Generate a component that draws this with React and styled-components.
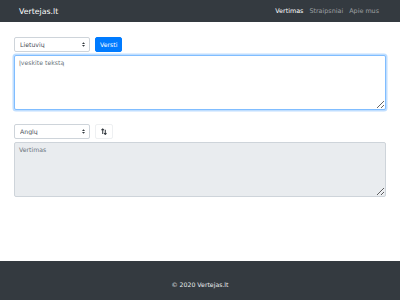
import React from 'react';
import styled, { createGlobalStyle } from 'styled-components';

const Global = createGlobalStyle`
	html, body {
		margin: 0;
		padding: 0;
		background: #fff;
		font-family: "DejaVu Sans", "Liberation Sans", sans-serif;
	}
	* { box-sizing: border-box; }
`;

const Page = styled.div`
	display: flex;
	flex-direction: column;
	min-height: 300px;
`;

const Navbar = styled.nav`
	display: flex;
	align-items: center;
	justify-content: space-between;
	height: 22px;
	padding: 0 21px 0 19px;
	background: #343a40;
`;

const Brand = styled.a`
	color: #fff;
	font-size: 7.8px;
	text-decoration: none;
`;

const NavLinks = styled.div`
	display: flex;
	gap: 6px;
`;

const NavLink = styled.a`
	font-size: 6.4px;
	color: ${p => (p.active ? '#fff' : 'rgba(255,255,255,.5)')};
	text-decoration: none;
`;

const Main = styled.main`
	display: flex;
	flex-direction: column;
	padding: 15px 14px 0;
`;

const Row = styled.div`
	display: flex;
	align-items: center;
	gap: 5px;
	margin-bottom: 3px;
	margin-top: ${p => p.top || 0}px;
`;

const SelectWrap = styled.div`
	position: relative;
	width: 76px;
	height: 15px;
`;

const Select = styled.select`
	appearance: none;
	display: block;
	width: 100%;
	height: 100%;
	margin: 0;
	padding: 0 12px 0 5px;
	border: 1px solid #ced4da;
	border-radius: 2px;
	background: #fff;
	color: #495057;
	font-family: inherit;
	font-size: 6.2px;
	outline: none;
`;

const Arrow = styled.svg`
	position: absolute;
	right: 5px;
	top: 5px;
	pointer-events: none;
`;

const Button = styled.button`
	height: 15px;
	margin: 0;
	padding: 0 4px;
	border-radius: 2px;
	font-family: inherit;
	font-size: 6.2px;
	border: 1px solid ${p => (p.primary ? '#007bff' : '#eef0f2')};
	background: ${p => (p.primary ? '#007bff' : '#fff')};
	color: ${p => (p.primary ? '#fff' : '#343a40')};
	display: flex;
	align-items: center;
	justify-content: center;
	width: ${p => (p.square ? '18px' : 'auto')};
`;

const TextArea = styled.textarea`
	display: block;
	width: 372px;
	height: 55px;
	margin: 0;
	padding: 3px 4px;
	border-radius: 2px;
	font-family: inherit;
	font-size: 6.2px;
	color: #495057;
	outline: none;
	border: 1px solid ${p => (p.focused ? '#80bdff' : '#ced4da')};
	box-shadow: ${p => (p.focused ? '0 0 0 1.5px rgba(0,123,255,.25)' : 'none')};
	background: ${p => (p.disabled ? '#e9ecef' : '#fff')};
	&::placeholder { color: #6c757d; }
`;

const Footer = styled.footer`
	margin-top: auto;
	height: 39px;
	background: #343a40;
	color: #e9ecef;
	font-size: 6.2px;
	display: flex;
	align-items: center;
	justify-content: center;
	padding-top: 7px;
`;

const SelectArrow = () => (
	<Arrow width="3" height="5" viewBox="0 0 4 6">
		<path d="M2 0 L4 2.3 H0 Z M2 6 L0 3.7 H4 Z" fill="#343a40" />
	</Arrow>
);

const LangSelect = ({ value }) => (
	<SelectWrap>
		<Select defaultValue={value}>
			<option>{value}</option>
		</Select>
		<SelectArrow />
	</SelectWrap>
);

export default function App() {
	return <Page>
		<Global />
		<Navbar>
			<Brand href="#">Vertejas.lt</Brand>
			<NavLinks>
				<NavLink active href="#">Vertimas</NavLink>
				<NavLink href="#">Straipsniai</NavLink>
				<NavLink href="#">Apie mus</NavLink>
			</NavLinks>
		</Navbar>
		<Main>
			<Row>
				<LangSelect value="Lietuvių" />
				<Button primary>Versti</Button>
			</Row>
			<TextArea focused placeholder="Įveskite tekstą" />
			<Row top={14}>
				<LangSelect value="Anglų" />
				<Button square>
					<svg width="6" height="7" viewBox="0 0 7 8">
						<path d="M2 7 V1 M0.5 2.5 L2 1 L3.5 2.5" stroke="#343a40" strokeWidth="1.2" fill="none" />
						<path d="M5 2 V7.5 M3.6 6 L5 7.5 L6.4 6" stroke="#343a40" strokeWidth="1.2" fill="none" />
					</svg>
				</Button>
			</Row>
			<TextArea disabled placeholder="Vertimas" />
		</Main>
		<Footer>© 2020 Vertejas.lt</Footer>
	</Page>;
}
